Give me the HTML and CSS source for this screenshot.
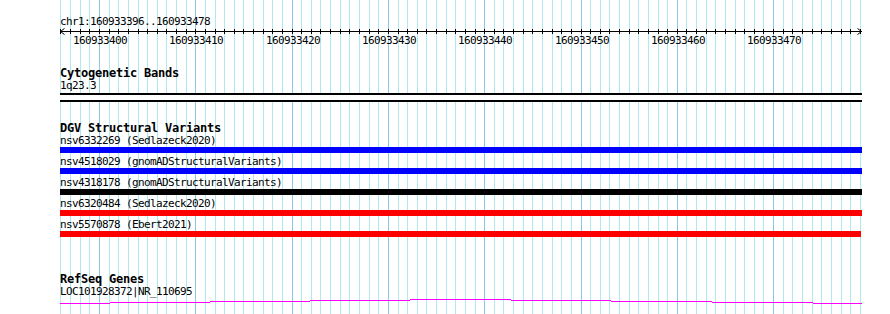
FILE: index.html
```html
<!DOCTYPE html>
<html lang="en">
<head>
    <meta charset="UTF-8">
    <meta name="viewport" content="width=device-width, initial-scale=1.0">
    <title>chr1:160933396..160933478</title>
    <link rel="stylesheet" href="styles.css">
</head>
<body>
    <div class="view">
        <svg class="grid" id="grid" width="890" height="314"></svg>
        <div class="tracks">
            <div class="locus">chr1:160933396..160933478</div>
            <svg class="ruler" id="ruler" width="802" height="20"></svg>

            <div class="track cyto">
                <div class="track-title">Cytogenetic Bands</div>
                <div class="feature-label">1q23.3</div>
                <div class="band"></div>
            </div>

            <div class="track dgv">
                <div class="track-title">DGV Structural Variants</div>
                <div class="feature">
                    <div class="feature-label">nsv6332269 (Sedlazeck2020)</div>
                    <div class="bar gain"></div>
                </div>
                <div class="feature">
                    <div class="feature-label">nsv4518029 (gnomADStructuralVariants)</div>
                    <div class="bar gain"></div>
                </div>
                <div class="feature">
                    <div class="feature-label">nsv4318178 (gnomADStructuralVariants)</div>
                    <div class="bar complex"></div>
                </div>
                <div class="feature">
                    <div class="feature-label">nsv6320484 (Sedlazeck2020)</div>
                    <div class="bar loss"></div>
                </div>
                <div class="feature">
                    <div class="feature-label">nsv5570878 (Ebert2021)</div>
                    <div class="bar loss short"></div>
                </div>
            </div>

            <div class="track refseq">
                <div class="track-title">RefSeq Genes</div>
                <div class="feature-label">LOC101928372|NR_110695</div>
                <svg class="wiggle" id="wiggle" width="802" height="8"></svg>
            </div>
        </div>
    </div>
    <script>
        const NS = 'http://www.w3.org/2000/svg';
        const grid = document.getElementById('grid');
        const ruler = document.getElementById('ruler');
        const wiggle = document.getElementById('wiggle');
        const bpWidth = 9.63;   // pixels per base
        const origin = 99;      // x of 160933400
        const trackLeft = 60;

        function el(name, attrs, text) {
            const node = document.createElementNS(NS, name);
            for (const key in attrs) node.setAttribute(key, attrs[key]);
            if (text) node.textContent = text;
            return node;
        }

        // axis line and arrows
        ruler.appendChild(el('rect', { x: 0, y: 3, width: 802, height: 1, class: 'axis' }));
        ruler.appendChild(el('polyline', { points: '4.5,0.5 0.5,3.5 4.5,6.5', class: 'arrow' }));
        ruler.appendChild(el('polyline', { points: '797.5,0.5 801.5,3.5 797.5,6.5', class: 'arrow' }));

        for (let k = -4; k <= 79; k++) {
            const x = Math.round(origin + k * bpWidth);
            const major = k % 10 === 0;
            grid.appendChild(el('rect', { x: x, y: 0, width: 1, height: 314, class: major ? 'major' : 'minor' }));
            ruler.appendChild(el('rect', { x: x - trackLeft, y: 1, width: 1, height: 5, class: 'axis' }));
            if (major) {
                ruler.appendChild(el('text', { x: x - trackLeft + 1, y: 16, class: 'tick-label' }, String(160933400 + k)));
            }
        }

        // binned coverage for the gene track
        const steps = [60, 110, 210, 310, 410, 511, 611, 712, 813, 862];
        const levels = [5, 4, 3, 2, 1, 2, 3, 4, 5];
        for (let i = 0; i < levels.length; i++) {
            wiggle.appendChild(el('rect', {
                x: steps[i] - trackLeft, y: levels[i],
                width: steps[i + 1] - steps[i], height: 1, class: 'line'
            }));
        }
    </script>
</body>
</html>
```

FILE: styles.css
```css
body {
    margin: 0;
    background-color: white;
    color: black;
    font-family: 'DejaVu Sans Mono', 'Liberation Mono', monospace;
}
.view {
    position: relative;
    width: 890px;
    height: 314px;
    overflow: hidden;
}
.grid {
    position: absolute;
    top: 0;
    left: 0;
    z-index: 0;
}
.grid .minor {
    fill: #aee9ef;
}
.grid .major {
    fill: #8cc6ea;
}
.tracks {
    position: relative;
    z-index: 1;
    padding-left: 60px;
    width: 802px;
}
.locus {
    padding-top: 16px;
    font-size: 11px;
    letter-spacing: -0.62px;
    line-height: 12px;
    height: 12px;
    white-space: nowrap;
}
.ruler {
    display: block;
}
.ruler .axis {
    fill: black;
}
.ruler .arrow {
    fill: none;
    stroke: black;
    stroke-width: 1;
}
.tick-label {
    font-family: 'DejaVu Sans Mono', 'Liberation Mono', monospace;
    font-size: 11px;
    letter-spacing: -0.62px;
    text-anchor: middle;
    fill: black;
}
.track-title {
    font-size: 12px;
    font-weight: bold;
    letter-spacing: -0.22px;
    line-height: 13px;
    height: 13px;
    white-space: nowrap;
}
.feature-label {
    font-size: 11px;
    letter-spacing: -0.62px;
    line-height: 12px;
    height: 12px;
    white-space: nowrap;
}
.cyto {
    margin-top: 19px;
}
.band {
    margin-top: 1px;
    height: 5px;
    border-top: 2px solid black;
    border-bottom: 2px solid black;
    background-color: white;
}
.dgv {
    margin-top: 20px;
}
.feature + .feature {
    margin-top: 3px;
}
.bar {
    height: 6px;
}
.bar.gain {
    background-color: #0000ff;
}
.bar.complex {
    background-color: black;
}
.bar.loss {
    background-color: #ff0000;
}
.bar.short {
    width: 801px;
}
.refseq {
    margin-top: 36px;
}
.wiggle {
    display: block;
}
.wiggle .line {
    fill: #ff00ff;
}
```
